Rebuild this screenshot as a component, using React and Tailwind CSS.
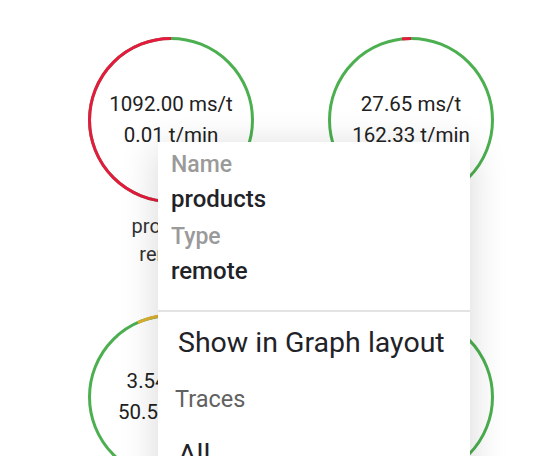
import React from 'react';

const RED = '#e6193f';
const GREEN = '#4caf50';
const YELLOW = '#e0b030';

// angle in degrees, clockwise from 12 o'clock
const point = (cx, cy, r, deg) => {
  const a = ((deg - 90) * Math.PI) / 180;
  return [cx + r * Math.cos(a), cy + r * Math.sin(a)];
};

const arcPath = (cx, cy, r, from, to) => {
  const [x0, y0] = point(cx, cy, r, from);
  const [x1, y1] = point(cx, cy, r, to);
  const large = to - from > 180 ? 1 : 0;
  return `M ${x0} ${y0} A ${r} ${r} 0 ${large} 1 ${x1} ${y1}`;
};

function Ring({ segments, lines }) {
  const size = 166;
  const c = size / 2;
  const r = 81.5;
  return (
    <div className="relative w-[166px] h-[166px] flex flex-col items-center justify-center">
      <svg className="absolute inset-0" width={size} height={size} viewBox={`0 0 ${size} ${size}`}>
        <circle cx={c} cy={c} r={r} fill="none" stroke={GREEN} strokeWidth="3" />
        {segments.map((s, i) => (
          <path key={i} d={arcPath(c, c, r, s.from, s.to)} fill="none" stroke={s.color} strokeWidth="3" />
        ))}
      </svg>
      {lines.map((l, i) => (
        <div key={i} className="relative text-[20.5px] leading-[31px] text-[#212121] whitespace-nowrap">{l}</div>
      ))}
    </div>
  );
}

const services = [
  { lines: ['1092.00 ms/t', '0.01 t/min'], segments: [{ from: 180, to: 360, color: RED }], name: 'products', type: 'remote' },
  { lines: ['27.65 ms/t', '162.33 t/min'], segments: [{ from: 353.7, to: 360, color: RED }], name: 'orders', type: 'remote' },
  { lines: ['3.54 ms/t', '50.57 t/min'], segments: [{ from: 336, to: 380, color: YELLOW }], name: 'catalog', type: 'local' },
  { lines: ['12.10 ms/t', '88.20 t/min'], segments: [], name: 'users', type: 'remote' },
];

export default function App() {
  return (
    <div className="relative w-[556px] h-[456px] overflow-hidden bg-white font-['Roboto',sans-serif]">
      <div className="grid grid-cols-[240px_240px] pl-[51px] pt-[37px] gap-y-[46px]">
        {services.map((s, i) => (
          <div key={i} className="flex flex-col items-center">
            <Ring segments={s.segments} lines={s.lines} />
            <div className="mt-[9px] flex flex-col items-center text-[20px] leading-[28px] text-[#333333]">
              <span>{s.name}</span>
              <span>{s.type}</span>
            </div>
          </div>
        ))}
      </div>

      {/* context menu */}
      <div className="absolute left-[158px] top-[142px] w-[312px] bg-white shadow-[0_6px_36px_rgba(0,0,0,0.16)]">
        <div className="pl-[13px] pt-[6px] pb-[22px]">
          <div className="text-[23px] leading-[34px] font-medium text-[#9a9a9a]">Name</div>
          <div className="text-[24px] leading-[34px] font-medium text-[#1f2328]">products</div>
          <div className="mt-[4px] text-[23px] leading-[34px] font-medium text-[#9a9a9a]">Type</div>
          <div className="text-[24px] leading-[34px] font-medium text-[#1f2328]">remote</div>
        </div>
        <div className="h-[2px] bg-[#e3e3e3]" />
        <div className="pl-[20px] text-[28.5px] leading-[62px] text-[#1f2328]">Show in Graph layout</div>
        <div className="pl-[17px] text-[23.5px] leading-[50px] text-[#616161]">Traces</div>
        <div className="pl-[20px] text-[28.5px] leading-[62px] text-[#1f2328]">All</div>
        <div className="pl-[20px] text-[28.5px] leading-[62px] text-[#1f2328]">Errors</div>
      </div>
    </div>
  );
}
